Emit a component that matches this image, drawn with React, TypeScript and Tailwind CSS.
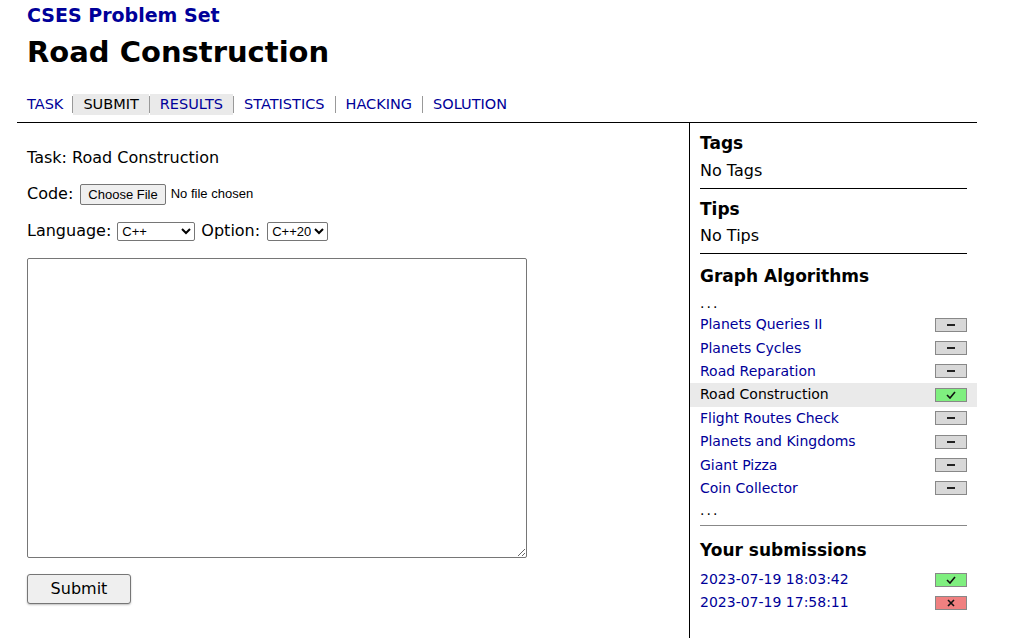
import React from 'react';

const tabs = [
  { name: 'TASK', active: false, shade: false },
  { name: 'SUBMIT', active: true, shade: true },
  { name: 'RESULTS', active: false, shade: true },
  { name: 'STATISTICS', active: false, shade: false },
  { name: 'HACKING', active: false, shade: false },
  { name: 'SOLUTION', active: false, shade: false },
];

const tasks = [
  { name: 'Planets Queries II', done: false },
  { name: 'Planets Cycles', done: false },
  { name: 'Road Reparation', done: false },
  { name: 'Road Construction', done: true, current: true },
  { name: 'Flight Routes Check', done: false },
  { name: 'Planets and Kingdoms', done: false },
  { name: 'Giant Pizza', done: false },
  { name: 'Coin Collector', done: false },
];

const Status = ({ kind }: { kind: 'none' | 'ok' | 'fail' }) => {
  const bg = kind === 'ok' ? 'bg-[#7fef7f]' : kind === 'fail' ? 'bg-[#f08080]' : 'bg-[#d8d8d8]';
  return (
    <span className={`w-[32px] h-[14px] border border-[#888] ${bg} flex items-center justify-center`}>
      {kind === 'none' && <span className="w-[8px] h-[2px] bg-[#222]" />}
      {kind === 'ok' && (
        <svg width="10" height="8" viewBox="0 0 10 8">
          <path d="M1 4 L4 7 L9 1" stroke="#111" strokeWidth="1.6" fill="none" />
        </svg>
      )}
      {kind === 'fail' && (
        <svg width="8" height="8" viewBox="0 0 8 8">
          <path d="M1 1 L7 7 M7 1 L1 7" stroke="#111" strokeWidth="1.6" fill="none" />
        </svg>
      )}
    </span>
  );
};

export default function App() {
  return (
    <div className="bg-white min-h-[638px] text-black" style={{ fontFamily: 'Verdana, "DejaVu Sans", sans-serif' }}>
      <div className="w-[960px] ml-[17px]">
        <div className="pl-[10px] pt-[3px]">
          <div className="text-[19px] font-bold text-[#000099] leading-[24px]">CSES Problem Set</div>
          <h1 className="text-[29px] font-bold leading-[40px] mt-[5px]">Road Construction</h1>
          <div className="flex mt-[22px] text-[14.5px] leading-[21px]">
            {tabs.map((t, i) => (
              <div key={t.name} className="flex items-stretch">
                {i > 0 && <span className="w-px bg-[#999] my-[2px]" />}
                <span
                  className={`${i === 0 ? 'pr-[9px]' : 'px-[10px]'} ${t.shade ? 'bg-[#eaeaea]' : ''} ${t.active ? 'text-black' : 'text-[#000099]'}`}
                >
                  {t.name}
                </span>
              </div>
            ))}
          </div>
        </div>
        <div className="border-t border-black mt-[7px] flex">
          <div className="w-[672px] pl-[10px] pt-[25px] text-[16px]">
            <div className="leading-[20px]">Task: Road Construction</div>
            <div className="flex items-center mt-[16px] h-[20px]">
              <span>Code:</span>
              <button className="ml-[7px] h-[21px] px-[7px] border border-[#767676] rounded-[2px] bg-[#efefef] text-[13px] leading-none" style={{ fontFamily: 'Arial, "Liberation Sans", sans-serif' }}>
                Choose File
              </button>
              <span className="ml-[5px] text-[13px]" style={{ fontFamily: 'Arial, "Liberation Sans", sans-serif' }}>No file chosen</span>
            </div>
            <div className="flex items-center mt-[17px] h-[20px]">
              <span>Language:</span>
              <select className="ml-[6px] w-[78px] h-[19px] border border-[#767676] rounded-[2px] text-[13px] bg-white" style={{ fontFamily: 'Arial, "Liberation Sans", sans-serif' }} defaultValue="C++">
                <option>C++</option>
              </select>
              <span className="ml-[6px]">Option:</span>
              <select className="ml-[7px] w-[61px] h-[19px] border border-[#767676] rounded-[2px] text-[13px] bg-white" style={{ fontFamily: 'Arial, "Liberation Sans", sans-serif' }} defaultValue="C++20">
                <option>C++20</option>
              </select>
            </div>
            <textarea className="block mt-[17px] w-[500px] h-[300px] border border-[#767676] rounded-[2px] bg-white" />
            <button className="block mt-[16px] w-[104px] h-[30px] border border-[#767676] rounded-[3px] bg-[#efefef] text-[16px] shadow-[0_1px_2px_rgba(0,0,0,0.25)]">
              Submit
            </button>
          </div>
          <div className="border-l border-black w-[288px] min-h-[516px] pt-[9px]">
            <div className="pl-[10px] pr-[10px]">
              <div className="text-[17px] font-bold leading-[22px]">Tags</div>
              <div className="text-[16px] leading-[22px] mt-[6px]">No Tags</div>
              <div className="border-t border-black mt-[6px]" />
              <div className="text-[17px] font-bold leading-[22px] mt-[9px]">Tips</div>
              <div className="text-[16px] leading-[22px] mt-[5px]">No Tips</div>
              <div className="border-t border-black mt-[6px]" />
              <div className="text-[17px] font-bold leading-[22px] mt-[11px]">Graph Algorithms</div>
              <div className="text-[14px] leading-[16px] mt-[8px] tracking-[2px]">...</div>
            </div>
            <div className="text-[14px] mt-[2px]">
              {tasks.map((t) => (
                <div
                  key={t.name}
                  className={`flex items-center justify-between h-[23.4px] pl-[10px] pr-[10px] ${t.current ? 'bg-[#eaeaea] text-black' : 'text-[#000099]'}`}
                >
                  <span>{t.name}</span>
                  <Status kind={t.done ? 'ok' : 'none'} />
                </div>
              ))}
            </div>
            <div className="pl-[10px] pr-[10px]">
              <div className="text-[14px] leading-[16px] mt-[2px] tracking-[2px]">...</div>
              <div className="border-t border-[#888] mt-[7px]" />
              <div className="text-[17px] font-bold leading-[22px] mt-[13px]">Your submissions</div>
              <div className="text-[14px] text-[#000099] mt-[7px]">
                <div className="flex items-center justify-between h-[23px]">
                  <span>2023-07-19 18:03:42</span>
                  <Status kind="ok" />
                </div>
                <div className="flex items-center justify-between h-[23px]">
                  <span>2023-07-19 17:58:11</span>
                  <Status kind="fail" />
                </div>
              </div>
            </div>
          </div>
        </div>
      </div>
    </div>
  );
}
